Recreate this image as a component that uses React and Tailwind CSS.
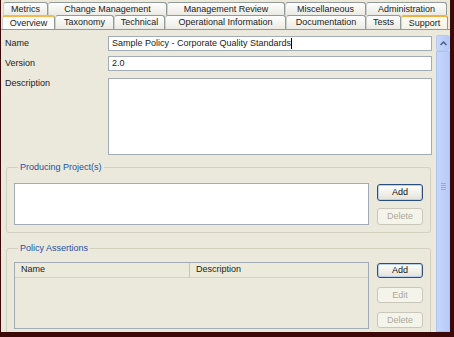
import React from 'react'

const font = { fontFamily: '"Liberation Sans", Arial, sans-serif' }

const backTabs = [
    { label: 'Metrics', w: 'w-[45px]' },
    { label: 'Change Management', w: 'w-[119px]' },
    { label: 'Management Review', w: 'w-[118px]' },
    { label: 'Miscellaneous', w: 'w-[81px]' },
    { label: 'Administration', w: 'w-[81px]' },
]

const frontTabs = [
    { label: 'Overview', w: 'w-[53px]', active: true },
    { label: 'Taxonomy', w: 'w-[59px]' },
    { label: 'Technical', w: 'w-[51px]' },
    { label: 'Operational Information', w: 'w-[121px]' },
    { label: 'Documentation', w: 'w-[80px]' },
    { label: 'Tests', w: 'w-[35px]' },
    { label: 'Support', w: 'w-[47px]', hot: true },
]

function Tab({ label, w, active, hot }) {
    let cls = 'bg-gradient-to-b from-[#fefefe] to-[#ebeae3] border-t border-t-[#919b9c]'
    if (active) cls = 'bg-[#fcfcfa] border-t-2 border-t-[#f6b84a]'
    if (hot) cls = 'bg-gradient-to-b from-[#fffbf0] to-[#f4f2e8] border-t-2 border-t-[#f0b040]'
    return (
        <div className={`${w} ${cls} h-full flex items-center justify-center border-l border-r border-l-[#cfd1cc] border-r-[#919b9c] rounded-t-[3px] text-[9px] text-[#222] leading-none`}>
            {label}
        </div>
    )
}

function Button({ children, disabled, h = 'h-[17px]' }) {
    return (
        <div className={`w-[46px] ${h} rounded-[3px] flex items-center justify-center text-[9px] leading-none border ${disabled
            ? 'border-[#cac8bb] bg-[#f5f4ea] text-[#aca899]'
            : 'border-[#2a4f7e] bg-gradient-to-b from-[#ffffff] to-[#e4e2d6] text-[#111] shadow-[inset_0_0_0_1px_#b8d0f0]'}`}>
            {children}
        </div>
    )
}

function GroupBox({ title, children }) {
    return (
        <fieldset className="border border-[#d3d0bf] rounded-[3px] mx-[5px] pl-[7px] pr-[7px] pb-[7px]">
            <legend className="ml-[4px] px-[2px] text-[9px] leading-[11px] text-[#2551a4]">{title}</legend>
            {children}
        </fieldset>
    )
}

export default function App() {
    return (
        <div className="w-[454px] h-[337px] bg-[#3d0808] pl-[1px] pr-[4px] pb-[5px] overflow-hidden" style={font}>
            <div className="w-full h-full bg-[#ece9d8] flex flex-col overflow-hidden">
                {/* tab strip */}
                <div className="h-[29px] flex flex-col pt-[2px]">
                    <div className="flex h-[13px] ml-[2px]">
                        {backTabs.map(t => <Tab key={t.label} {...t} />)}
                    </div>
                    <div className="flex h-[14px] ml-[1px]">
                        {frontTabs.map(t => <Tab key={t.label} {...t} />)}
                    </div>
                </div>

                <div className="flex flex-1 border-t border-t-[#919b9c] bg-[#ebe8dc] overflow-hidden">
                    <div className="flex-1 flex flex-col text-[9px] text-[#222]">
                        <div className="grid grid-cols-[103px_324px] gap-y-[5px] pl-[4px] pt-[6px] leading-[11px]">
                            <div className="pt-[2px]">Name</div>
                            <div className="h-[15px] bg-white border border-[#a3acb6] flex items-center pl-[3px]">
                                Sample Policy - Corporate Quality Standards<span className="w-px h-[11px] bg-black" />
                            </div>
                            <div className="pt-[2px]">Version</div>
                            <div className="h-[15px] bg-white border border-[#a3acb6] flex items-center pl-[3px]">2.0</div>
                            <div className="pt-[2px]">Description</div>
                            <div className="h-[77px] bg-white border border-[#a3acb6] mt-[2px]" />
                        </div>

                        <div className="mt-[7px]">
                            <GroupBox title="Producing Project(s)">
                                <div className="flex gap-[8px] mt-[10px]">
                                    <div className="w-[355px] h-[42px] bg-white border border-[#a3acb6]" />
                                    <div className="flex flex-col gap-[7px] pt-[1px]">
                                        <Button>Add</Button>
                                        <Button disabled>Delete</Button>
                                    </div>
                                </div>
                            </GroupBox>
                        </div>

                        <div className="mt-[10px]">
                            <GroupBox title="Policy Assertions">
                                <div className="flex gap-[8px] mt-[8px]">
                                    <div className="w-[355px] h-[67px] border border-[#a3acb6] flex flex-col">
                                        <div className="h-[15px] flex bg-[#ebeadb] border-b border-b-[#d6d2c2]">
                                            <div className="w-[175px] pl-[6px] flex items-center border-r border-r-[#c7c5b2]">Name</div>
                                            <div className="pl-[6px] flex items-center">Description</div>
                                        </div>
                                    </div>
                                    <div className="flex flex-col gap-[9px] pt-[1px]">
                                        <Button h="h-[15px]">Add</Button>
                                        <Button disabled h="h-[16px]">Edit</Button>
                                        <Button disabled h="h-[16px]">Delete</Button>
                                    </div>
                                </div>
                            </GroupBox>
                        </div>
                    </div>

                    {/* scrollbar */}
                    <div className="w-[15px] flex flex-col pt-[5px] border-r border-r-[#a9a799]">
                        <div className="w-[14px] h-[16px] rounded-[2px] bg-gradient-to-r from-[#c8d8fb] to-[#b3c8f5] border border-[#b9cbf3] flex items-center justify-center">
                            <svg width="7" height="5" viewBox="0 0 7 5">
                                <path d="M0.5 4 L3.5 1 L6.5 4" fill="none" stroke="#4d6185" strokeWidth="1.5" />
                            </svg>
                        </div>
                        <div className="w-[14px] flex-1 bg-gradient-to-r from-[#c5d6fc] to-[#b6cbf7] border border-[#aec3f0] flex items-center justify-center">
                            <div className="flex flex-col gap-[1px] mt-[-10px]">
                                <div className="w-[5px] h-px bg-[#8fa8e0]" />
                                <div className="w-[5px] h-px bg-[#8fa8e0]" />
                                <div className="w-[5px] h-px bg-[#8fa8e0]" />
                                <div className="w-[5px] h-px bg-[#8fa8e0]" />
                            </div>
                        </div>
                    </div>
                </div>
            </div>
        </div>
    )
}
